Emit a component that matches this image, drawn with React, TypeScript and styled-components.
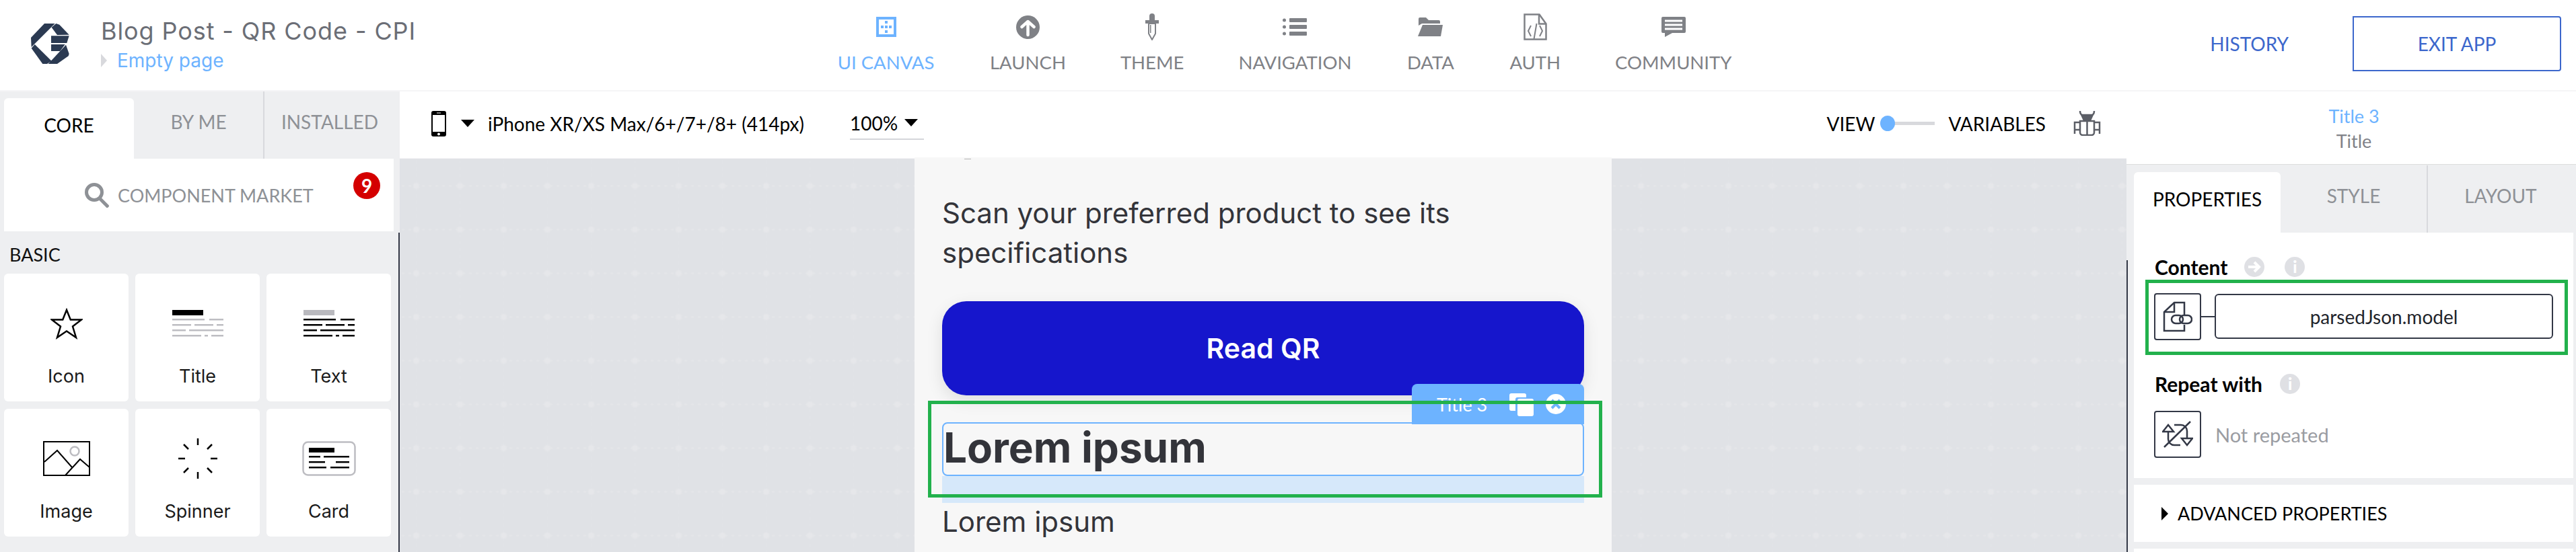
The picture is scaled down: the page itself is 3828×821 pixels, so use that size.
import React from 'react'
import styled, { createGlobalStyle } from 'styled-components'

const ui = `Lato, 'Liberation Sans', sans-serif`
const app = `Inter, 'Open Sans', sans-serif`
const blue = '#6db3ff'
const ink = '#333846'
const panel = '#eeeff1'
const green = '#22b14c'

const GlobalStyle = createGlobalStyle`
  html, body { margin: 0; padding: 0; background: #fff; }
  body { font-family: ${ui}; }
  * { box-sizing: border-box; }
`

const Page = styled.div`
  width: 3828px;
  height: 821px;
  display: flex;
  flex-direction: column;
  overflow: hidden;
`

const TopBar = styled.header`
  flex: 0 0 136px;
  display: flex;
  border-bottom: 2px solid #f5f5f7;
`

const Brand = styled.div`
  flex: 0 0 1243px;
  display: flex;
  padding: 34px 0 0 46px;
  gap: 47px;
`

const BrandText = styled.div`
  display: flex;
  flex-direction: column;
  margin-top: -6px;
  font-family: ${app};
`

const AppName = styled.div`
  font-size: 36px;
  line-height: 36px;
  letter-spacing: 0.9px;
  color: #6b6e76;
  white-space: nowrap;
`

const PageName = styled.div`
  display: flex;
  align-items: center;
  gap: 15px;
  margin-top: 9px;
  font-size: 28px;
  line-height: 34px;
  color: ${blue};
`

const PageCaret = styled.span`
  width: 0;
  height: 0;
  border-left: 9px solid #d8d9dd;
  border-top: 10px solid transparent;
  border-bottom: 10px solid transparent;
`

const Nav = styled.nav`
  display: flex;
  gap: 81px;
`

const NavItem = styled.div<{ $active?: boolean; $width: number }>`
  flex: 0 0 ${p => p.$width}px;
  display: flex;
  flex-direction: column;
  align-items: center;
  padding-top: 20px;
  font-size: 27.500px;
  line-height: 28px;
  white-space: nowrap;
  color: ${p => (p.$active ? blue : '#7f8186')};
`

const NavIcon = styled.div`
  height: 40px;
  margin-bottom: 19px;
  display: flex;
  align-items: center;
`

const Actions = styled.div`
  margin-left: auto;
  display: flex;
  align-items: center;
  padding: 0 22px 0 0;
  gap: 95px;
  height: 130px;
  font-size: 28px;
  color: #3c67cc;
`

const ExitButton = styled.div`
  width: 310px;
  height: 82px;
  border: 2px solid #3c67cc;
  border-radius: 0 4px 4px 0;
  display: flex;
  align-items: center;
  justify-content: center;
`

const Workspace = styled.div`
  flex: 1;
  min-height: 0;
  display: flex;
`

const LeftPanel = styled.aside`
  flex: 0 0 594px;
  background: ${panel};
  display: flex;
  flex-direction: column;
`

const TabRow = styled.div`
  flex: 0 0 100px;
  display: flex;
  padding-top: 10px;
`

const LeftTabs = styled(TabRow)`
  padding-left: 6px;
`

const RightTabs = styled(TabRow)`
  flex-basis: 101px;
  padding-top: 11px;
  padding-left: 11px;
  background: ${panel};
`

const Tab = styled.div<{ $active?: boolean; $width: number; $divider?: boolean }>`
  flex: 0 0 ${p => p.$width}px;
  display: flex;
  align-items: center;
  justify-content: center;
  padding-bottom: 10px;
  font-size: 28px;
  color: ${p => (p.$active ? '#000' : '#8e9196')};
  background: ${p => (p.$active ? '#fff' : 'transparent')};
  border-radius: ${p => (p.$active ? '6px 6px 0 0' : '0')};
  border-right: ${p => (p.$divider ? '2px solid #d8d9dd' : '0')};
  margin-top: ${p => (p.$active ? '0' : '-10px')};
`

const MarketBox = styled.div`
  margin: 0 9px 0 6px;
  height: 108px;
  background: #fff;
  display: flex;
  align-items: center;
  padding: 0 20px 0 120px;
  font-size: 27px;
  color: #8e9196;
`

const MarketLabel = styled.span`
  margin-left: 13px;
  white-space: nowrap;
`

const Badge = styled.span`
  margin-left: auto;
  margin-top: -28px;
  width: 40px;
  height: 40px;
  border-radius: 50%;
  background: #d40000;
  color: #fff;
  font-size: 28px;
  font-weight: 700;
  display: flex;
  align-items: center;
  justify-content: center;
`

const Library = styled.div`
  flex: 1;
  margin-top: 2px;
  padding: 0 0 0 6px;
  border-right: 2px solid ${ink};
`

const GroupTitle = styled.div`
  padding: 18px 0 0 8px;
  height: 61px;
  font-size: 27px;
  line-height: 30px;
  color: #111;
`

const CardGrid = styled.div`
  display: grid;
  grid-template-columns: repeat(3, 185px);
  grid-auto-rows: 190px;
  column-gap: 10px;
  row-gap: 11px;
`

const ComponentCard = styled.div`
  background: #fff;
  border-radius: 6px;
  display: flex;
  flex-direction: column;
  align-items: center;
  padding-top: 44px;
  font-family: ${app};
  font-size: 27px;
  line-height: 32px;
  color: #1a1a1a;
`

const CardIcon = styled.div`
  height: 60px;
  margin-bottom: 33px;
  display: flex;
  align-items: center;
  justify-content: center;
`

const Center = styled.main`
  flex: 1;
  min-width: 0;
  display: flex;
  flex-direction: column;
`

const Toolbar = styled.div`
  flex: 0 0 100px;
  display: flex;
  align-items: center;
  padding: 0 38px 4px 47px;
  font-size: 28px;
  color: #000;
  border-bottom: 1px solid #f5f5f7;
`

const DeviceName = styled.span`
  margin-left: 20px;
  white-space: nowrap;
`

const Caret = styled.span`
  margin-left: 22px;
  width: 0;
  height: 0;
  border-left: 10px solid transparent;
  border-right: 10px solid transparent;
  border-top: 11px solid #000;
`

const Zoom = styled.div`
  margin-left: 68px;
  width: 110px;
  height: 48px;
  display: flex;
  align-items: center;
  border-bottom: 2px solid #d5d6da;
  & > span { margin-left: 10px; }
`

const ToolbarRight = styled.div`
  margin-left: auto;
  display: flex;
  align-items: center;
`

const Switch = styled.div`
  width: 81px;
  height: 5px;
  margin: 0 20px 0 8px;
  background: #d8d9dd;
  position: relative;
`

const SwitchKnob = styled.span`
  position: absolute;
  left: 0;
  top: -9px;
  width: 22px;
  height: 23px;
  border-radius: 50%;
  background: ${blue};
`

const BugSlot = styled.span`
  display: flex;
  margin-left: 41px;
`

const Canvas = styled.div`
  flex: 1;
  min-height: 0;
  display: flex;
  justify-content: center;
  background-color: #e0e2e6;
  background-image:
    radial-gradient(circle at center, #e6e7ea 0, #e6e7ea 3px, transparent 6px),
    radial-gradient(ellipse 3px 1.5px at center, #e4e5e8 60%, transparent 100%),
    radial-gradient(ellipse 1px 3px at center, #e2e4e8 60%, transparent 100%);
  background-size: 65px 65px, 10px 65px, 65px 10px;
  background-position: -8px 8px, 0 8px, -8px 0;
`

const Phone = styled.div`
  width: 1036px;
  margin-top: -2px;
  padding: 0 41px;
  background: #f7f7f7;
  color: #33343a;
  font-family: ${app};
  position: relative;
`

const StatusMark = styled.div`
  position: absolute;
  top: 2px;
  left: 74px;
  width: 10px;
  height: 1px;
  background: #b5b5b5;
`

const Lead = styled.p`
  margin: 53px 0 0;
  font-size: 42px;
  line-height: 59px;
  font-weight: 400;
`

const ReadButton = styled.div`
  margin-top: 43px;
  height: 140px;
  border-radius: 36px;
  background: #1616cc;
  color: #fff;
  font-size: 41px;
  font-weight: 600;
  display: flex;
  align-items: center;
  justify-content: center;
  box-shadow: 0 8px 24px rgba(0, 0, 0, 0.1);
`

const TitleBlock = styled.div`
  margin-top: 40px;
  position: relative;
`

const SelectedTitle = styled.h1`
  margin: 0;
  height: 80px;
  border: 2px solid ${blue};
  border-radius: 8px;
  font-size: 62px;
  line-height: 72px;
  font-weight: 700;
  white-space: nowrap;
`

const DropZone = styled.div`
  height: 40px;
  background: #d6e8fa;
`

const SelectionTag = styled.div`
  position: absolute;
  right: 0;
  top: -57px;
  width: 256px;
  height: 60px;
  background: ${blue};
  border-radius: 8px 8px 0 0;
  color: #fff;
  font-family: ${ui};
  font-size: 27px;
  display: flex;
  align-items: center;
  padding-left: 37px;
`

const TagIcons = styled.span`
  display: flex;
  align-items: center;
  gap: 18px;
  margin-left: 33px;
`

const Annotation = styled.div`
  position: absolute;
  left: -21px;
  right: -27px;
  top: -32px;
  height: 144px;
  border: 5px solid ${green};
  pointer-events: none;
`

const LoremBody = styled.p`
  margin: 0;
  font-size: 42px;
  line-height: 56px;
`

const RightPanel = styled.aside`
  flex: 0 0 668px;
  background: ${panel};
  display: flex;
  flex-direction: column;
  position: relative;
  &::before {
    content: '';
    position: absolute;
    left: 0;
    top: 251px;
    bottom: 0;
    width: 2px;
    background: ${ink};
  }
`

const Selection = styled.div`
  flex: 0 0 109px;
  background: #fff;
  border-bottom: 1px solid #ddd;
  display: flex;
  flex-direction: column;
  align-items: center;
  padding: 18px 0 0 8px;
  font-size: 27px;
  line-height: 37px;
`

const SelectionName = styled.div`
  color: ${blue};
`

const SelectionType = styled.div`
  color: #808288;
`

const Sections = styled.div`
  display: flex;
  flex-direction: column;
  gap: 10px;
  padding: 0 4px 0 11px;
`

const Section = styled.section<{ $height: number }>`
  background: #fff;
  height: ${p => p.$height}px;
`

const PropertiesSection = styled(Section)`
  padding: 34px 8px 0 17px;
`

const FieldLabel = styled.div`
  display: flex;
  align-items: center;
  padding-left: 14px;
  height: 34px;
  font-size: 30px;
  font-weight: 700;
  color: #000;
`

const LabelIcons = styled.span<{ $offset: number }>`
  display: flex;
  gap: 30px;
  margin-left: ${p => p.$offset}px;
`

const HintCircle = styled.span`
  width: 30px;
  height: 30px;
  border-radius: 50%;
  background: #dfe0e4;
  color: #fff;
  font-size: 24px;
  font-weight: 900;
  line-height: 30px;
  text-align: center;
`

const BoundField = styled.div`
  margin-top: 2px;
  height: 112px;
  border: 5px solid ${green};
  display: flex;
  align-items: center;
  padding: 0 17px 3px 8px;
`

const IconBox = styled.div`
  flex: 0 0 70px;
  height: 70px;
  border: 2px solid ${ink};
  border-radius: 4px;
  display: flex;
  align-items: center;
  justify-content: center;
`

const Connector = styled.span`
  flex: 0 0 20px;
  height: 2px;
  background: ${ink};
`

const ValueBox = styled.div`
  flex: 1;
  height: 67px;
  border: 2px solid ${ink};
  border-radius: 6px;
  display: flex;
  align-items: center;
  justify-content: center;
  font-size: 28px;
  color: #22252c;
`

const RepeatLabel = styled(FieldLabel)`
  margin-top: 26px;
`

const RepeatRow = styled.div`
  margin: 23px 0 0 13px;
  display: flex;
  align-items: center;
  gap: 21px;
  font-size: 29px;
  color: #9a9ca2;
`

const AdvancedRow = styled(Section)`
  display: flex;
  align-items: center;
  gap: 14px;
  padding: 0 0 0 41px;
  font-size: 27px;
  color: #000;
`

const Triangle = styled.span`
  width: 0;
  height: 0;
  border-left: 10px solid #000;
  border-top: 10px solid transparent;
  border-bottom: 10px solid transparent;
`

const Svg = styled.svg`
  display: block;
  flex: none;
`

const Logo = () => (
  <Svg width={57} height={61} viewBox="48 42 171 183" fill="#2b3a52">
    <polygon points="108,45 155,45 50,150 48,108" />
    <polygon points="65,138 140,212 120,225 100,225 50,155" />
    <polygon points="140,62 160,45 175,50 218,95 165,96" />
    <polygon points="138,100 218,100 208,132 138,132" />
    <polygon points="138,138 200,138 178,168 138,168" />
    <polygon points="204,140 218,180 215,190 165,225 125,225" />
  </Svg>
)

const CanvasIcon = () => (
  <Svg width={30} height={30} viewBox="0 0 30 30" fill={blue}>
    <path d="M0 0h30v30H0z M4 4v22h22V4z" fillRule="evenodd" />
    <rect x="13" y="6" width="4" height="4" />
    <rect x="7" y="13" width="4" height="4" />
    <rect x="13" y="13" width="4" height="4" />
    <rect x="19" y="13" width="4" height="4" />
    <rect x="13" y="20" width="4" height="4" />
  </Svg>
)

const LaunchIcon = () => (
  <Svg width={35} height={35} viewBox="0 0 35 35">
    <circle cx="17.5" cy="17.5" r="17.5" fill="#7f8186" />
    <path d="M17.5 29V9M8.5 17l9-8 9 8" fill="none" stroke="#fff" strokeWidth="4.5" strokeLinecap="round" strokeLinejoin="round" />
  </Svg>
)

const DropperIcon = () => (
  <Svg width={20} height={40} viewBox="0 0 20 40">
    <path d="M6 10V4a4 4 0 0 1 8 0v6h6v5H0v-5z" fill="#7f8186" />
    <path d="M5 15h10v15l-5 9-5-9z" fill="none" stroke="#7f8186" strokeWidth="2" />
    <path d="M7 17h1.500v12H7z" fill="#7f8186" />
  </Svg>
)

const ListIcon = () => (
  <Svg width={36} height={26} viewBox="0 0 36 26" fill="#7f8186">
    <circle cx="2.500" cy="3" r="2.500" />
    <circle cx="2.500" cy="13" r="2.500" />
    <circle cx="2.500" cy="23" r="2.500" />
    <rect x="10" y="0" width="26" height="6" rx="1" />
    <rect x="10" y="10" width="26" height="6" rx="1" />
    <rect x="10" y="20" width="26" height="6" rx="1" />
  </Svg>
)

const FolderIcon = () => (
  <Svg width={37} height={28} viewBox="0 0 37 28" fill="#7f8186">
    <path d="M1 12V2a2 2 0 0 1 2-2h9l4 4h15a2 2 0 0 1 2 2v3H6z" />
    <path d="M7 11h30l-3 17H0z" />
  </Svg>
)

const AuthIcon = () => (
  <Svg width={35} height={40} viewBox="0 0 35 40" fill="none" stroke="#7f8186" strokeWidth="2.500">
    <path d="M1.500 1.500h22l10 14v23h-32z" />
    <path d="M23 1.500v14h10.500" />
    <path d="M11 18l-4 8 4 8M24 18l4 8-4 8M19.500 15l-4 23" strokeWidth="2" />
  </Svg>
)

const ChatIcon = () => (
  <Svg width={36} height={30} viewBox="0 0 36 30">
    <path d="M2 0h32a2 2 0 0 1 2 2v20a2 2 0 0 1-2 2H16L5 30v-6H2a2 2 0 0 1-2-2V2a2 2 0 0 1 2-2z" fill="#7f8186" />
    <path d="M5 6h26M5 12h26M5 18h26" stroke="#fff" strokeWidth="3" />
  </Svg>
)

const PhoneIcon = () => (
  <Svg width={22} height={38} viewBox="0 0 22 38">
    <rect width="22" height="38" rx="3" fill="#000" />
    <rect x="2" y="6" width="18" height="25" fill="#fff" />
    <rect x="8" y="2.500" width="6" height="1" fill="#fff" />
    <circle cx="11" cy="34.500" r="2" fill="#fff" />
  </Svg>
)

const BugIcon = () => (
  <Svg width={41} height={37} viewBox="0 0 41 37" fill="none" stroke="#5b5e66" strokeWidth="2.500">
    <path d="M10 0c0 4 1 6 4 6h13c3 0 4-2 4-6" />
    <path d="M11 6h19l-4 9H15z" fill="#5b5e66" stroke="none" />
    <path d="M10 15h21v17a4 4 0 0 1-4 4H14a4 4 0 0 1-4-4z" />
    <path d="M20.500 15v21M10 17H2v10M31 17h8v10M10 28H2v6M31 28h8v6" />
  </Svg>
)

const SearchIcon = () => (
  <Svg width={36} height={37} viewBox="0 0 36 37" fill="none" stroke="#8e9196">
    <circle cx="14" cy="14" r="11.500" strokeWidth="5" />
    <path d="M22 23l13 13" strokeWidth="5" />
  </Svg>
)

const StarIcon = () => (
  <Svg width={48} height={47} viewBox="0 0 48 47">
    <path d="M24 3l5.800 14.500H46L33 27.500 38 44 24 34.500 10 44l5-16.500L2 17.500h16.200z" fill="none" stroke="#000" strokeWidth="2.500" />
  </Svg>
)

const rows = [
  [[0, 48], [55, 76]],
  [[0, 28], [33, 61], [66, 76]],
  [[0, 20], [25, 76]],
  [[0, 43], [48, 53], [58, 76]],
]

const LinesIcon = ({ bar, line }: { bar: string; line: string }) => (
  <Svg width={76} height={40} viewBox="0 0 76 40">
    <rect width="46" height="8" fill={bar} />
    {rows.map((row, i) => row.map(([a, b]) => (
      <rect key={`${i}-${a}`} x={a} y={13 + i * 8} width={b - a} height={2.500} fill={line} />
    )))}
  </Svg>
)

const ImageIcon = () => (
  <Svg width={70} height={52} viewBox="0 0 70 52">
    <rect x="1" y="1" width="68" height="50" fill="none" stroke="#000" strokeWidth="2" />
    <circle cx="47" cy="15" r="6.500" fill="none" stroke="#bdbdc2" strokeWidth="2.500" />
    <path d="M2 31l19-17 22 25M33 51l22-24 14 12" fill="none" stroke="#000" strokeWidth="2" />
  </Svg>
)

const SpinnerIcon = () => (
  <Svg width={58} height={60} viewBox="0 0 58 60" stroke="#000" strokeWidth="2.500" fill="none">
    <path d="M29 0v10M29 50v10M0 30h10M48 30h10M8 9l7 7M43 44l7 7M50 9l-7 7M15 44l-7 7" />
  </Svg>
)

const CardGlyph = () => (
  <Svg width={80} height={52} viewBox="0 0 80 52">
    <rect x="1.500" y="1.500" width="77" height="49" rx="7" fill="none" stroke="#bdbdc2" strokeWidth="2.500" />
    <rect x="10" y="10" width="38" height="7" fill="#000" />
    {[[10, 27], [32, 70], [10, 34], [50, 70], [10, 36], [42, 70]].map(([a, b], i) => (
      <rect key={i} x={a} y={22 + Math.floor(i / 2) * 8} width={b - a} height={2.500} fill="#000" />
    ))}
  </Svg>
)

const CopyIcon = () => (
  <Svg width={36} height={36} viewBox="0 0 36 36">
    <path d="M3 2h19a3 3 0 0 1 3 3v3H12a3 3 0 0 0-3 3v17H3a3 3 0 0 1-3-3V5a3 3 0 0 1 3-3z" fill="#fff" />
    <rect x="12" y="10" width="24" height="26" rx="3" fill="#fff" />
  </Svg>
)

const CloseIcon = () => (
  <Svg width={30} height={30} viewBox="0 0 30 30">
    <circle cx="15" cy="15" r="15" fill="#fff" />
    <path d="M9 9l12 12M21 9L9 21" stroke={blue} strokeWidth="4" />
  </Svg>
)

const ArrowHint = () => (
  <Svg width={30} height={30} viewBox="0 0 30 30">
    <circle cx="15" cy="15" r="15" fill="#dfe0e4" />
    <path d="M6 15h16M15 8l7 7-7 7" fill="none" stroke="#fff" strokeWidth="4" />
  </Svg>
)

const BindIcon = () => (
  <Svg width={44} height={46} viewBox="0 0 44 46" fill="none" stroke={ink} strokeWidth="2.500">
    <path d="M32 20V2H17L2 16v28h30v-9" />
    <path d="M17 2v14H2" />
    <rect x="13" y="21" width="17" height="12" rx="6" />
    <rect x="25" y="21" width="18" height="12" rx="6" />
  </Svg>
)

const RepeatIcon = () => (
  <Svg width={46} height={40} viewBox="0 0 46 40" fill="none" stroke={ink} strokeWidth="2.500">
    <path d="M9 16v11a9 9 0 0 0 9 9h9M37 26V15a9 9 0 0 0-9-9H18" />
    <path d="M1 16l8-10 8 10zM29 26l8 10 8-10z" />
    <path d="M3 39L42 1" />
  </Svg>
)

const navItems = [
  { label: 'UI CANVAS', width: 147, icon: <CanvasIcon />, active: true },
  { label: 'LAUNCH', width: 112, icon: <LaunchIcon /> },
  { label: 'THEME', width: 92, icon: <DropperIcon /> },
  { label: 'NAVIGATION', width: 168, icon: <ListIcon /> },
  { label: 'DATA', width: 73, icon: <FolderIcon /> },
  { label: 'AUTH', width: 74, icon: <AuthIcon /> },
  { label: 'COMMUNITY', width: 168, icon: <ChatIcon /> },
]

const components = [
  { label: 'Icon', icon: <StarIcon /> },
  { label: 'Title', icon: <LinesIcon bar="#000" line="#bdbdc2" /> },
  { label: 'Text', icon: <LinesIcon bar="#b9b9be" line="#000" /> },
  { label: 'Image', icon: <ImageIcon /> },
  { label: 'Spinner', icon: <SpinnerIcon /> },
  { label: 'Card', icon: <CardGlyph /> },
]

const App = () => (
  <Page>
    <GlobalStyle />
    <TopBar>
      <Brand>
        <Logo />
        <BrandText>
          <AppName>Blog Post - QR Code - CPI</AppName>
          <PageName><PageCaret />Empty page</PageName>
        </BrandText>
      </Brand>
      <Nav>
        {navItems.map(item => (
          <NavItem key={item.label} $active={item.active} $width={item.width}>
            <NavIcon>{item.icon}</NavIcon>
            {item.label}
          </NavItem>
        ))}
      </Nav>
      <Actions>
        <span>HISTORY</span>
        <ExitButton>EXIT APP</ExitButton>
      </Actions>
    </TopBar>
    <Workspace>
      <LeftPanel>
        <LeftTabs>
          <Tab $active $width={193}>CORE</Tab>
          <Tab $width={194} $divider>BY ME</Tab>
          <Tab $width={194}>INSTALLED</Tab>
        </LeftTabs>
        <MarketBox>
          <SearchIcon />
          <MarketLabel>COMPONENT MARKET</MarketLabel>
          <Badge>9</Badge>
        </MarketBox>
        <Library>
          <GroupTitle>BASIC</GroupTitle>
          <CardGrid>
            {components.map(c => (
              <ComponentCard key={c.label}>
                <CardIcon>{c.icon}</CardIcon>
                {c.label}
              </ComponentCard>
            ))}
          </CardGrid>
        </Library>
      </LeftPanel>
      <Center>
        <Toolbar>
          <PhoneIcon />
          <Caret />
          <DeviceName>iPhone XR/XS Max/6+/7+/8+ (414px)</DeviceName>
          <Zoom>100%<Caret /></Zoom>
          <ToolbarRight>
            VIEW
            <Switch><SwitchKnob /></Switch>
            VARIABLES
            <BugSlot><BugIcon /></BugSlot>
          </ToolbarRight>
        </Toolbar>
        <Canvas>
          <Phone>
            <StatusMark />
            <Lead>Scan your preferred product to see its specifications</Lead>
            <ReadButton>Read QR</ReadButton>
            <TitleBlock>
              <SelectedTitle>Lorem ipsum</SelectedTitle>
              <DropZone />
              <SelectionTag>
                Title 3
                <TagIcons><CopyIcon /><CloseIcon /></TagIcons>
              </SelectionTag>
              <Annotation />
            </TitleBlock>
            <LoremBody>Lorem ipsum</LoremBody>
          </Phone>
        </Canvas>
      </Center>
      <RightPanel>
        <Selection>
          <SelectionName>Title 3</SelectionName>
          <SelectionType>Title</SelectionType>
        </Selection>
        <RightTabs>
          <Tab $active $width={218}>PROPERTIES</Tab>
          <Tab $width={219} $divider>STYLE</Tab>
          <Tab $width={216}>LAYOUT</Tab>
        </RightTabs>
        <Sections>
          <PropertiesSection $height={365}>
            <FieldLabel>
              Content
              <LabelIcons $offset={25}>
                <ArrowHint />
                <HintCircle>i</HintCircle>
              </LabelIcons>
            </FieldLabel>
            <BoundField>
              <IconBox><BindIcon /></IconBox>
              <Connector />
              <ValueBox>parsedJson.model</ValueBox>
            </BoundField>
            <RepeatLabel>
              Repeat with
              <LabelIcons $offset={26}>
                <HintCircle>i</HintCircle>
              </LabelIcons>
            </RepeatLabel>
            <RepeatRow>
              <IconBox><RepeatIcon /></IconBox>
              Not repeated
            </RepeatRow>
          </PropertiesSection>
          <AdvancedRow $height={85}>
            <Triangle />
            ADVANCED PROPERTIES
          </AdvancedRow>
          <Section $height={40} />
        </Sections>
      </RightPanel>
    </Workspace>
  </Page>
)

export default App
